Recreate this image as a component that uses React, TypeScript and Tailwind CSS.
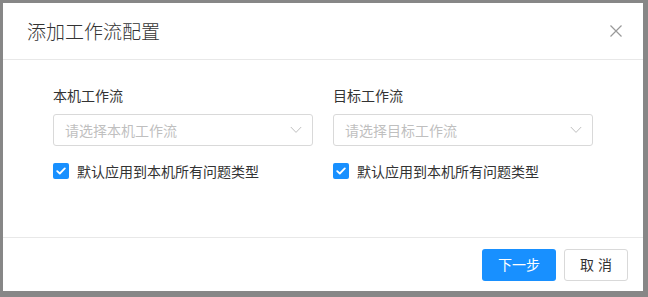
import React from "react";

const font = { fontFamily: '"Noto Sans CJK SC", "Noto Sans", "Liberation Sans", sans-serif' };

function Check() {
  return (
    <span className="flex h-4 w-4 items-center justify-center rounded-[2px] bg-[#1890ff]">
      <svg width="10" height="8" viewBox="0 0 10 8" fill="none">
        <path d="M1.2 4.1 L3.8 6.5 L8.8 1.4" stroke="white" strokeWidth="1.8" strokeLinecap="round" strokeLinejoin="round" />
      </svg>
    </span>
  );
}

function Column({ label, placeholder }: { label: string; placeholder: string }) {
  return (
    <div className="flex w-[260px] flex-col">
      <div className="text-[14px] leading-[22px] text-[#333]">{label}</div>
      <div className="mt-2 flex h-8 items-center justify-between rounded-[3px] border border-[#d9d9d9] bg-white pl-[11px] pr-[10px]">
        <span className="text-[14px] text-[#bfbfbf]">{placeholder}</span>
        <svg width="12" height="8" viewBox="0 0 12 8" fill="none">
          <path d="M0.8 1 L6 6.4 L11.2 1" stroke="#bfbfbf" strokeWidth="1" />
        </svg>
      </div>
      <div className="mt-[14px] flex h-[22px] items-center gap-2">
        <Check />
        <span className="text-[14px] text-[#333]">默认应用到本机所有问题类型</span>
      </div>
    </div>
  );
}

export default function App() {
  return (
    <div className="flex h-[297px] w-[648px] items-start bg-[#878787] pl-[3px] pt-[3px]" style={font}>
      <div className="flex h-[288px] w-[640px] flex-col bg-white">
        <div className="flex h-[57px] items-center justify-between border-b border-[#e8e8e8] pl-[24px] pr-[21px]">
          <span className="text-[19px] font-light text-[#333]">添加工作流配置</span>
          <svg width="12" height="12" viewBox="0 0 12 12" fill="none">
            <path d="M0.5 0.5 L11.5 11.5 M11.5 0.5 L0.5 11.5" stroke="#999" strokeWidth="1.2" />
          </svg>
        </div>
        <div className="flex flex-1 gap-5 border-b border-[#e8e8e8] px-[50px] pt-[24px]">
          <Column label="本机工作流" placeholder="请选择本机工作流" />
          <Column label="目标工作流" placeholder="请选择目标工作流" />
        </div>
        <div className="flex h-[53px] items-center justify-end gap-2 pr-[15px]">
          <button className="h-8 w-[74px] rounded-[3px] bg-[#1890ff] text-[14px] text-white">下一步</button>
          <button className="h-8 w-16 rounded-[3px] border border-[#d9d9d9] bg-white pl-1 text-[14px] tracking-[4px] text-[#333]">取消</button>
        </div>
      </div>
    </div>
  );
}
